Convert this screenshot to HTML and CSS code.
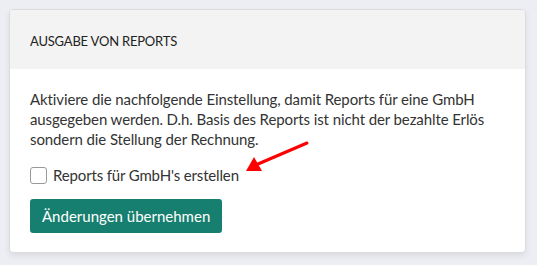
FILE: index.html
```html
<!DOCTYPE html>
<html lang="de">
<head>
  <meta charset="UTF-8">
  <title>Ausgabe von Reports</title>
  <link rel="stylesheet" href="styles.css">
</head>
<body>
<div class="card">
  <div class="card-header">Ausgabe von Reports</div>
  <div class="card-body">
    <p class="intro">Aktiviere die nachfolgende Einstellung, damit Reports für eine GmbH ausgegeben werden. D.h. Basis des Reports ist nicht der bezahlte Erlös sondern die Stellung der Rechnung.</p>
    <label class="check">
      <span class="box"></span>
      <span>Reports für GmbH's erstellen</span>
    </label>
    <button class="btn">Änderungen übernehmen</button>
    <svg class="arrow" width="80" height="40" viewBox="0 0 80 40">
      <line x1="69" y1="3" x2="20" y2="24" stroke="#f00" stroke-width="3" stroke-linecap="round"/>
      <polygon points="8,31 16,17 24,31" fill="#f00"/>
    </svg>
  </div>
</div>
</body>
</html>
```

FILE: styles.css
```css
body {
    margin: 0;
    padding: 9px 11px 12px 9px;
    background: #eceef3;
    font-family: 'Lato', sans-serif;
    color: #333;
}

.card {
    background: #fff;
    border: 1px solid #dcdcdc;
    border-radius: 4px;
    box-shadow: 0 3px 6px rgba(0, 0, 0, 0.08);
    overflow: hidden;
}

.card-header {
    background: #f3f3f3;
    height: 59px;
    box-sizing: border-box;
    padding: 23px 20px 0;
    font-size: 13px;
    font-weight: 400;
    letter-spacing: -0.2px;
    text-transform: uppercase;
    color: #222;
}

.card-body {
    position: relative;
    padding: 20px 20px 19px;
    font-size: 15px;
    line-height: 20px;
}

.intro {
    margin: 0 0 16px;
    letter-spacing: -0.1px;
}

.check {
    display: flex;
    align-items: center;
    gap: 6px;
    margin-bottom: 14px;
    letter-spacing: -0.15px;
}

.box {
    width: 15px;
    height: 15px;
    border: 1px solid #999;
    border-radius: 3px;
}

.btn {
    font-family: 'Lato', sans-serif;
    font-size: 15px;
    color: #fff;
    background: #177f6f;
    border: 0;
    border-radius: 3px;
    padding: 0 12px;
    height: 34px;
}

.arrow {
    position: absolute;
    left: 228px;
    top: 71px;
}
```
